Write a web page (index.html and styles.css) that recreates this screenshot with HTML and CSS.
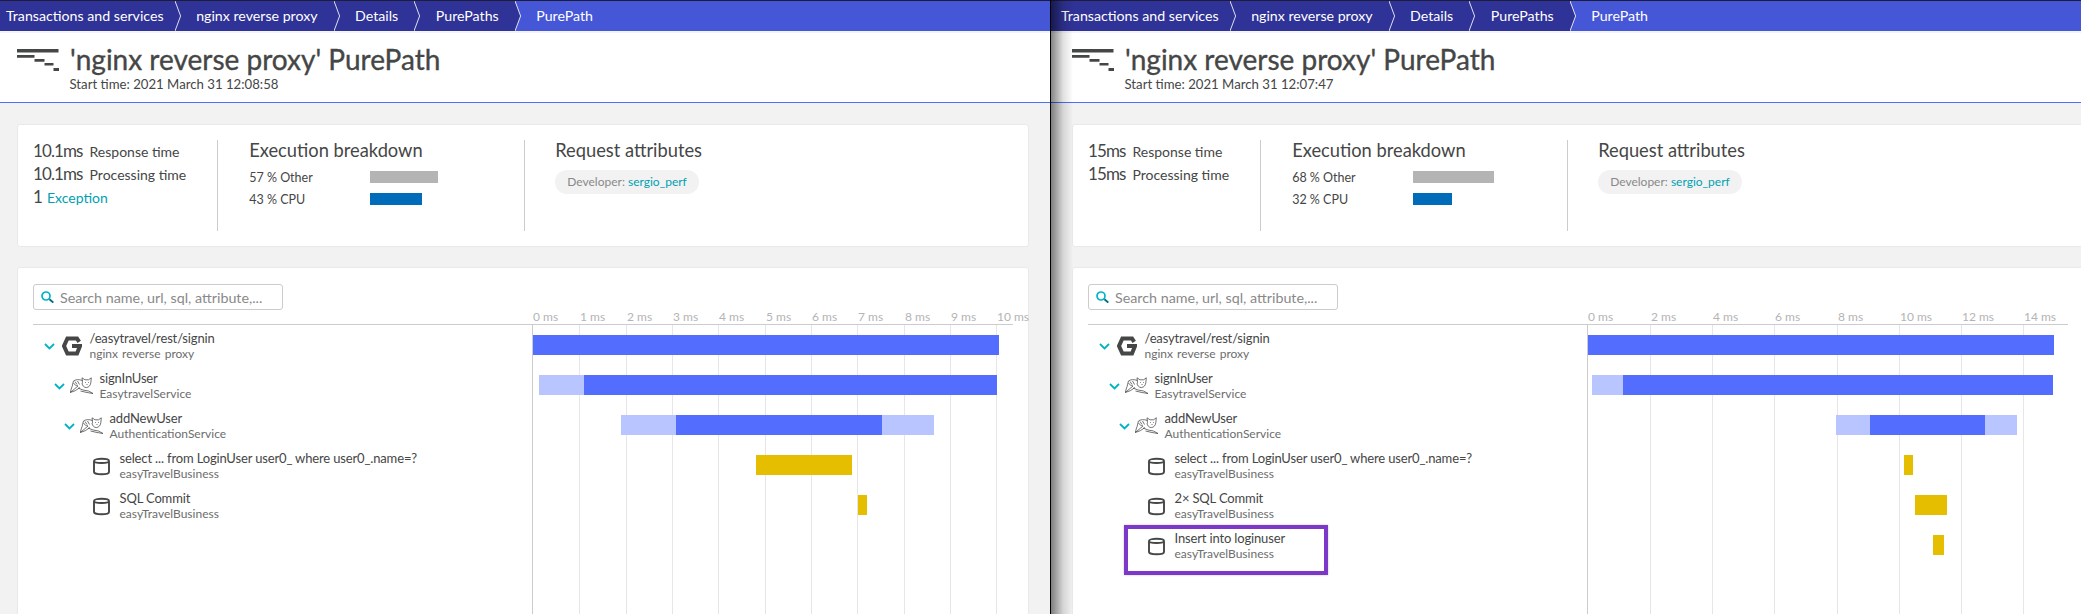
FILE: index.html
```html
<!DOCTYPE html>
<html lang="en">
<head>
<meta charset="utf-8">
<title>PurePath comparison</title>
<link rel="stylesheet" href="styles.css">
</head>
<body>
<svg class="defs" width="0" height="0" aria-hidden="true">
  <defs>
    <symbol id="i-trace" viewBox="0 0 42 22"><path d="M0 0h41.5v3.4H0zM0 6h17.5v2.8H0zM17.5 10h10v2.8h-10zM27.5 14h9v2.6h-9zM36.5 19h5.5V22h-5.5z"/></symbol>
    <symbol id="i-chev" viewBox="0 0 11 7"><path d="M1 1l4.500 4.500L10 1" fill="none" stroke="currentColor" stroke-width="1.800"/></symbol>
    <symbol id="i-nginx" viewBox="0 0 20 20"><path d="M17.200 5.800L15 2.400H5.400L2 10l3.400 7.600H15L18 10h-8" fill="none" stroke="currentColor" stroke-width="4"/></symbol>
    <symbol id="i-cat" viewBox="0 0 23 18"><g fill="none" stroke="currentColor" stroke-width=".75"><path d="M12.500 5.500L12 .8l3 2h3.500l2.800-2-.5 5c-.3 2.500-1.800 4.500-4.500 4.800-2.500-.2-4-2-4.300-4.600z"/><path d="M12.500 3.500C9 2.200 5.500 2.400 3.500 4 2.200 7.500 2.800 8.500 1.500 11L.3 15.500"/><path d="M3.500 6c1 2 2.500 2.500 4.500 3L.3 15.500l5-1.800L10 10.500"/><path d="M5 4.500l2 3M7.500 4l2 3.500"/><path d="M8 11l5 2 5.500 1 4.500 2.500-6-1-6.500-1.500"/><path d="M15 5.500h.8M18.200 5.500h.8M16.500 7.500h1"/></g></symbol>
    <symbol id="i-db" viewBox="0 0 17 19"><path d="M1 4c0-3 15-3 15 0v11c0 3-15 3-15 0zM1 4c0 2.600 15 2.600 15 0" fill="none" stroke="currentColor" stroke-width="1.900"/></symbol>
    <symbol id="i-search" viewBox="0 0 13 12"><circle cx="5" cy="5" r="4" fill="none" stroke="#00b4c8" stroke-width="1.700"/><path d="M8.500 8.200l3.800 3.400" stroke="#006d7d" stroke-width="1.900"/></symbol>
    <symbol id="i-sep" viewBox="0 0 10 30" preserveAspectRatio="none"><path d="M0 0l8 15L0 30" fill="inherit" stroke="#fff" stroke-width="1"/></symbol>
  </defs>
</svg>

<div class="desk">
  <!-- LEFT WINDOW -->
  <section class="win">
    <nav class="crumbs">
      <a class="crumb">Transactions and services<svg class="sep"><use href="#i-sep"/></svg></a>
      <a class="crumb">nginx reverse proxy<svg class="sep"><use href="#i-sep"/></svg></a>
      <a class="crumb">Details<svg class="sep"><use href="#i-sep"/></svg></a>
      <a class="crumb">PurePaths<svg class="sep"><use href="#i-sep"/></svg></a>
      <a class="crumb crumb-now">PurePath</a>
    </nav>
    <header class="head">
      <svg class="head-icon"><use href="#i-trace"/></svg>
      <div>
        <h1 class="title">'nginx reverse proxy' PurePath</h1>
        <p class="start">Start time: 2021 March 31 12:08:58</p>
      </div>
    </header>
    <main class="main">
      <section class="card summary">
        <div class="metrics">
          <div class="metric"><b class="num">10.1ms</b><span class="lbl">Response time</span></div>
          <div class="metric"><b class="num">10.1ms</b><span class="lbl">Processing time</span></div>
          <div class="metric metric-tight"><b class="num">1</b><a class="lbl link">Exception</a></div>
        </div>
        <div class="breakdown">
          <h2 class="sub">Execution breakdown</h2>
          <div class="bd-row"><span class="bd-name">57 % Other</span><i class="bd-bar bd-other" style="width:68px"></i></div>
          <div class="bd-row"><span class="bd-name">43 % CPU</span><i class="bd-bar bd-cpu" style="width:52px"></i></div>
        </div>
        <div class="attrs">
          <h2 class="sub">Request attributes</h2>
          <span class="tag">Developer: <a class="link">sergio_perf</a></span>
        </div>
      </section>
      <section class="card trace">
        <div class="trace-head">
          <div class="search"><svg class="search-icon"><use href="#i-search"/></svg><span>Search name, url, sql, attribute,...</span></div>
          <div class="axis">
            <span class="tick-lbl" style="left:1px">0 ms</span><span class="tick-lbl" style="left:48px">1 ms</span><span class="tick-lbl" style="left:95px">2 ms</span><span class="tick-lbl" style="left:141px">3 ms</span><span class="tick-lbl" style="left:187px">4 ms</span><span class="tick-lbl" style="left:234px">5 ms</span><span class="tick-lbl" style="left:280px">6 ms</span><span class="tick-lbl" style="left:326px">7 ms</span><span class="tick-lbl" style="left:373px">8 ms</span><span class="tick-lbl" style="left:419px">9 ms</span><span class="tick-lbl" style="left:465px">10 ms</span>
          </div>
        </div>
        <div class="trace-body">
          <div class="tree">
            <div class="row"><svg class="chev"><use href="#i-chev"/></svg><span class="slot"><svg class="ic-nginx"><use href="#i-nginx"/></svg></span><div class="node"><div class="n1">/easytravel/rest/signin</div><div class="n2">nginx reverse proxy</div></div></div>
            <div class="row lv1"><svg class="chev"><use href="#i-chev"/></svg><span class="slot"><svg class="ic-cat"><use href="#i-cat"/></svg></span><div class="node"><div class="n1">signInUser</div><div class="n2">EasytravelService</div></div></div>
            <div class="row lv2"><svg class="chev"><use href="#i-chev"/></svg><span class="slot"><svg class="ic-cat"><use href="#i-cat"/></svg></span><div class="node"><div class="n1">addNewUser</div><div class="n2">AuthenticationService</div></div></div>
            <div class="row lv3"><span class="chev"></span><span class="slot"><svg class="ic-db"><use href="#i-db"/></svg></span><div class="node"><div class="n1">select ... from LoginUser user0_ where user0_.name=?</div><div class="n2">easyTravelBusiness</div></div></div>
            <div class="row lv3"><span class="chev"></span><span class="slot"><svg class="ic-db"><use href="#i-db"/></svg></span><div class="node"><div class="n1">SQL Commit</div><div class="n2">easyTravelBusiness</div></div></div>
          </div>
          <div class="timeline">
            <i class="tick tick-0" style="left:0"></i><i class="tick" style="left:47px"></i><i class="tick" style="left:94px"></i><i class="tick" style="left:140px"></i><i class="tick" style="left:186px"></i><i class="tick" style="left:233px"></i><i class="tick" style="left:279px"></i><i class="tick" style="left:325px"></i><i class="tick" style="left:372px"></i><i class="tick" style="left:418px"></i><i class="tick" style="left:464px"></i>
            <div class="tl-row"><i class="bar b-main" style="left:1px;width:466px"></i></div>
            <div class="tl-row"><i class="bar b-wait" style="left:7px;width:45px"></i><i class="bar b-main" style="left:52px;width:413px"></i></div>
            <div class="tl-row"><i class="bar b-wait" style="left:89px;width:55px"></i><i class="bar b-main" style="left:144px;width:206px"></i><i class="bar b-wait" style="left:350px;width:52px"></i></div>
            <div class="tl-row"><i class="bar b-db" style="left:224px;width:96px"></i></div>
            <div class="tl-row"><i class="bar b-db" style="left:326px;width:9px"></i></div>
          </div>
        </div>
      </section>
    </main>
  </section>

  <!-- RIGHT WINDOW -->
  <section class="win win-front">
    <nav class="crumbs">
      <a class="crumb">Transactions and services<svg class="sep"><use href="#i-sep"/></svg></a>
      <a class="crumb">nginx reverse proxy<svg class="sep"><use href="#i-sep"/></svg></a>
      <a class="crumb">Details<svg class="sep"><use href="#i-sep"/></svg></a>
      <a class="crumb">PurePaths<svg class="sep"><use href="#i-sep"/></svg></a>
      <a class="crumb crumb-now">PurePath</a>
    </nav>
    <header class="head">
      <svg class="head-icon"><use href="#i-trace"/></svg>
      <div>
        <h1 class="title">'nginx reverse proxy' PurePath</h1>
        <p class="start">Start time: 2021 March 31 12:07:47</p>
      </div>
    </header>
    <main class="main">
      <section class="card summary">
        <div class="metrics">
          <div class="metric"><b class="num">15ms</b><span class="lbl">Response time</span></div>
          <div class="metric"><b class="num">15ms</b><span class="lbl">Processing time</span></div>
        </div>
        <div class="breakdown">
          <h2 class="sub">Execution breakdown</h2>
          <div class="bd-row"><span class="bd-name">68 % Other</span><i class="bd-bar bd-other" style="width:81px"></i></div>
          <div class="bd-row"><span class="bd-name">32 % CPU</span><i class="bd-bar bd-cpu" style="width:39px"></i></div>
        </div>
        <div class="attrs">
          <h2 class="sub">Request attributes</h2>
          <span class="tag">Developer: <a class="link">sergio_perf</a></span>
        </div>
      </section>
      <section class="card trace">
        <div class="trace-head">
          <div class="search"><svg class="search-icon"><use href="#i-search"/></svg><span>Search name, url, sql, attribute,...</span></div>
          <div class="axis">
            <span class="tick-lbl" style="left:1px">0 ms</span><span class="tick-lbl" style="left:64px">2 ms</span><span class="tick-lbl" style="left:126px">4 ms</span><span class="tick-lbl" style="left:188px">6 ms</span><span class="tick-lbl" style="left:251px">8 ms</span><span class="tick-lbl" style="left:313px">10 ms</span><span class="tick-lbl" style="left:375px">12 ms</span><span class="tick-lbl" style="left:437px">14 ms</span>
          </div>
        </div>
        <div class="trace-body">
          <div class="tree">
            <div class="row"><svg class="chev"><use href="#i-chev"/></svg><span class="slot"><svg class="ic-nginx"><use href="#i-nginx"/></svg></span><div class="node"><div class="n1">/easytravel/rest/signin</div><div class="n2">nginx reverse proxy</div></div></div>
            <div class="row lv1"><svg class="chev"><use href="#i-chev"/></svg><span class="slot"><svg class="ic-cat"><use href="#i-cat"/></svg></span><div class="node"><div class="n1">signInUser</div><div class="n2">EasytravelService</div></div></div>
            <div class="row lv2"><svg class="chev"><use href="#i-chev"/></svg><span class="slot"><svg class="ic-cat"><use href="#i-cat"/></svg></span><div class="node"><div class="n1">addNewUser</div><div class="n2">AuthenticationService</div></div></div>
            <div class="row lv3"><span class="chev"></span><span class="slot"><svg class="ic-db"><use href="#i-db"/></svg></span><div class="node"><div class="n1">select ... from LoginUser user0_ where user0_.name=?</div><div class="n2">easyTravelBusiness</div></div></div>
            <div class="row lv3"><span class="chev"></span><span class="slot"><svg class="ic-db"><use href="#i-db"/></svg></span><div class="node"><div class="n1">2× SQL Commit</div><div class="n2">easyTravelBusiness</div></div></div>
            <div class="row lv3"><span class="chev"></span><span class="slot"><svg class="ic-db"><use href="#i-db"/></svg></span><div class="node"><div class="n1">Insert into loginuser</div><div class="n2">easyTravelBusiness</div></div><i class="callout"></i></div>
          </div>
          <div class="timeline">
            <i class="tick tick-0" style="left:0"></i><i class="tick" style="left:63px"></i><i class="tick" style="left:125px"></i><i class="tick" style="left:187px"></i><i class="tick" style="left:250px"></i><i class="tick" style="left:312px"></i><i class="tick" style="left:374px"></i><i class="tick" style="left:436px"></i>
            <div class="tl-row"><i class="bar b-main" style="left:1px;width:466px"></i></div>
            <div class="tl-row"><i class="bar b-wait" style="left:5px;width:31px"></i><i class="bar b-main" style="left:36px;width:430px"></i></div>
            <div class="tl-row"><i class="bar b-wait" style="left:249px;width:34px"></i><i class="bar b-main" style="left:283px;width:115px"></i><i class="bar b-wait" style="left:398px;width:32px"></i></div>
            <div class="tl-row"><i class="bar b-db" style="left:317px;width:9px"></i></div>
            <div class="tl-row"><i class="bar b-db" style="left:328px;width:32px"></i></div>
            <div class="tl-row"><i class="bar b-db" style="left:346px;width:11px"></i></div>
          </div>
        </div>
      </section>
    </main>
  </section>
</div>
</body>
</html>
```

FILE: styles.css
```css
* { box-sizing: border-box; }
html, body { margin: 0; height: 100%; }
body {
  width: 2081px;
  height: 614px;
  overflow: hidden;
  font-family: "Lato", "Noto Sans", sans-serif;
  color: #454646;
  background: #f2f2f2;
}
.defs { position: absolute; }

.desk { display: flex; height: 614px; overflow: hidden; }

.win {
  --inset: 0px;
  position: relative;
  flex: 0 0 1050px;
  height: 614px;
  overflow: hidden;
  background: #f2f2f2;
}
.win-front {
  --inset: 4px;
  flex: 0 0 1055px;
  border-left: 1px solid #000;
}
.win-front::after {
  content: "";
  position: absolute;
  top: 0;
  bottom: 0;
  left: 0;
  width: 22px;
  background: linear-gradient(90deg, rgba(0,0,0,.48), rgba(0,0,0,.12) 55%, rgba(0,0,0,0));
  pointer-events: none;
}

/* breadcrumb */
.crumbs {
  display: flex;
  height: 31px;
  padding-left: var(--inset);
  border-top: 1px solid #1d1d3a;
  background: #2f3296;
  font-size: 14.2px;
  color: #fff;
}
.crumb {
  position: relative;
  display: flex;
  align-items: center;
  flex: none;
  padding: 0 16px 2px 21.5px;
  white-space: nowrap;
}
.crumb:first-child { padding: 0 11px 2px 6px; }
.crumb-now { flex: 1; background: #4556d7; }
.sep {
  position: absolute;
  top: 0;
  left: 100%;
  width: 7px;
  height: 30px;
  z-index: 1;
  fill: #2f3296;
}

/* header */
.head {
  display: flex;
  height: 72px;
  padding: 11px 0 0 calc(16.5px + var(--inset));
  border-top: 2px solid #f4f4f4;
  border-bottom: 1px solid #526cff;
  background: #fff;
}
.head-icon { width: 42px; height: 22px; margin-top: 5px; fill: #454646; flex: none; }
.title {
  margin: 0 0 0 11.5px;
  font-size: 28px;
  line-height: 30px;
  font-weight: 400;
  -webkit-text-stroke: .35px #454646;
  color: #454646;
}
.start { margin: 2px 0 0 11px; font-size: 13.2px; line-height: 16px; }

/* main */
.main { padding: 21px 21px 0 calc(17px + var(--inset)); }
.card {
  background: #fff;
  border: 1px solid #e9e9e9;
  border-radius: 3px;
}
.summary {
  display: flex;
  height: 123px;
  padding: 15px 0 0 15px;
}
.metrics {
  padding: 0 31px 0 0;
  height: 91px;
  border-right: 1px solid #ccc;
}
.metric {
  display: flex;
  align-items: baseline;
  height: 23px;
  line-height: 21px;
}
.num { font-weight: 400; font-size: 17px; letter-spacing: -.9px; margin-right: 7px; color: #454646; }
.metric-tight .num { margin-right: 5px; }
.lbl { font-size: 14px; }
.link { color: #00a1b2; }
.breakdown {
  width: 307px;
  height: 91px;
  padding-left: 31px;
  border-right: 1px solid #ccc;
}
.sub { margin: 0 0 3px; font-size: 18.3px; line-height: 21px; font-weight: 400; }
.bd-row { display: flex; align-items: center; height: 12px; margin-top: 10px; font-size: 12.5px; }
.bd-name { width: 120.5px; }
.bd-bar { display: block; height: 12px; }
.bd-other { background: #b4b4b4; }
.bd-cpu { background: #006bb8; }
.attrs { padding-left: 30px; }
.tag {
  display: inline-block;
  margin-top: 6px;
  height: 24px;
  padding: 0 12px;
  border-radius: 12px;
  background: #f2f2f2;
  font-size: 12px;
  line-height: 24px;
  color: #898989;
}

/* trace */
.trace { margin-top: 20px; height: 400px; padding: 16px 15px 0; }
.trace-head { display: flex; height: 41px; border-bottom: 1px solid #ccc; width: 980px; }
.search {
  display: flex;
  align-items: center;
  gap: 6px;
  width: 250px;
  height: 26px;
  padding-left: 7px;
  border: 1px solid #ccc;
  border-radius: 3px;
  font-size: 14.3px;
  color: #898989;
}
.search-icon { width: 13px; height: 12px; flex: none; }
.axis { position: relative; margin-left: 249px; flex: 1; }
.tick-lbl {
  position: absolute;
  bottom: -1px;
  font-size: 12px;
  line-height: 16px;
  color: #b4b4b4;
  white-space: nowrap;
}
.trace-body { display: flex; }
.tree { width: 499px; flex: none; }
.row {
  position: relative;
  display: flex;
  align-items: center;
  height: 40px;
  padding: 2px 0 0 10.5px;
}
.lv1 { padding-left: 20.5px; }
.lv2 { padding-left: 30.5px; }
.lv3 { padding-left: 40.5px; }
.chev { width: 11px; height: 7px; margin-right: 7px; flex: none; color: #00b4c8; }
.slot { display: flex; align-items: center; width: 28px; flex: none; color: #454646; }
.ic-nginx { width: 20px; height: 20px; }
.ic-cat { width: 23px; height: 18px; margin-left: -1.5px; }
.ic-db { width: 17px; height: 19px; margin-left: 1.5px; }
.n1 { font-size: 13px; line-height: 16px; letter-spacing: -.15px; white-space: nowrap; }
.n2 { font-size: 12px; line-height: 16px; word-spacing: 1px; color: #6d6d6d; white-space: nowrap; }
.callout {
  position: absolute;
  top: 0;
  left: 36px;
  width: 204px;
  height: 50px;
  border: 4px solid #7c38c9;
  box-shadow: 0 0 2px rgba(0,0,0,.25);
}

.timeline { position: relative; flex: 1; height: 290px; }
.tick { position: absolute; top: 0; bottom: 0; width: 1px; background: #e6e6e6; }
.tick-0 { background: #ccc; }
.tl-row { position: relative; height: 40px; }
.bar { position: absolute; top: 10px; height: 20px; }
.b-main { background: #536dff; }
.b-wait { background: #b9c5ff; }
.b-db { background: #e6be00; }
```
